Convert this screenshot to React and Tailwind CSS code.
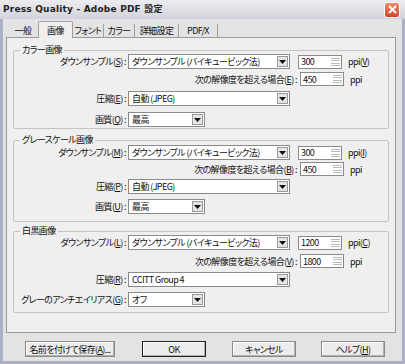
import React from "react";

const U = ({ c }) => <span className="underline">{c}</span>;

const Arrow = () => (
  <div className="w-[11px] h-[11px] my-auto mr-[1px] bg-[#e4e4e4] border border-[#9a9a9a] flex items-center justify-center">
    <svg width="7" height="4" viewBox="0 0 7 4"><path d="M0 0h7L3.5 4z" fill="#111" /></svg>
  </div>
);

const Sel = ({ w, children }) => (
  <div className={`${w} h-[15px] bg-white border border-[#8a8a8a] flex items-stretch`}>
    <div className="flex-1 pl-[3px] flex items-center whitespace-nowrap overflow-hidden">{children}</div>
    <Arrow />
  </div>
);

const Spin = ({ v }) => (
  <div className="w-[44px] h-[14px] bg-white border border-[#8a8a8a] flex items-stretch">
    <div className="flex-1 pl-[2px] flex items-center">{v}</div>
    <div className="w-[11px] flex flex-col justify-center items-center gap-[2px] pr-[1px]">
      <div className="w-[9px] h-[3px] border-t border-b border-[#b8b8b8]" />
      <div className="w-[9px] h-[3px] border-t border-b border-[#b8b8b8]" />
    </div>
  </div>
);

const Label = ({ children }) => (
  <div className="w-[114px] text-right pr-[2px] whitespace-nowrap">{children}</div>
);

const Group = ({ title, children, cls }) => (
  <div className={`relative border border-[#c4c4c4] rounded-[2px] ${cls}`}>
    <div className="absolute -top-[7px] left-[6px] px-[2px] bg-[#efefef] leading-[12px]">{title}</div>
    {children}
  </div>
);

const DownRows = ({ k1, k2, k3, k4, spin1, spin2, sel3, label4, sel4, gaps }) => (
  <>
    <div className={`flex items-center ${gaps[0]}`}>
      <Label>ダウンサンプル(<U c={k1} />) :</Label>
      <Sel w="w-[162px]">ダウンサンプル (バイキュービック法)</Sel>
      <div className="ml-[8px]"><Spin v={spin1} /></div>
      <div className="ml-[6px]">ppi(<U c={k2[0]} />)</div>
    </div>
    <div className={`flex items-center ${gaps[1]}`}>
      <div className="w-[286px] text-right pr-[3px] whitespace-nowrap">次の解像度を超える場合(<U c={k2[1]} />) :</div>
      <Spin v={spin2} />
      <div className="ml-[6px]">ppi</div>
    </div>
    <div className={`flex items-center ${gaps[2]}`}>
      <Label>圧縮(<U c={k3} />) :</Label>
      <Sel w="w-[162px]">{sel3}</Sel>
    </div>
    <div className={`flex items-center ${gaps[3]}`}>
      <Label>{label4}(<U c={k4} />) :</Label>
      <Sel w="w-[77px]">{sel4}</Sel>
    </div>
  </>
);

const Btn = ({ w, children, def }) => (
  <div className={`${w} h-[16px] flex items-center justify-center whitespace-nowrap bg-[#ececec] border ${def ? "border-[#202020]" : "border-[#8a8a8a]"} shadow-[inset_-1px_-1px_0_#b0b0b0,inset_1px_1px_0_#ffffff]`}>
    {children}
  </div>
);

export default function App() {
  return (
    <div
      className="w-[405px] h-[364px] bg-[#e3e3e3] text-[9px] tracking-[-0.6px] text-[#111] leading-none flex flex-col border-x-[3px] border-b-[3px] border-[#aeb0c6] [font-feature-settings:'palt']"
      style={{ fontFamily: '"Noto Sans CJK JP", "Noto Sans", sans-serif' }}
    >
      {/* title bar */}
      <div className="h-[19px] flex items-center bg-gradient-to-b from-[#ececf0] to-[#d2d3da] -mx-[3px] pl-[3px] pr-[5px]">
        <div className="font-bold text-[9px] tracking-[0.2px] text-[#222]" style={{ fontFamily: '"DejaVu Sans", "Noto Sans CJK JP", sans-serif' }}>
          Press Quality - Adobe PDF 設定
        </div>
        <div className="ml-auto w-[16px] h-[16px] rounded-[3px] bg-gradient-to-b from-[#f08a6e] to-[#d4402a] border border-white flex items-center justify-center">
          <svg width="9" height="9" viewBox="0 0 9 9"><path d="M1 1l7 7M8 1L1 8" stroke="#fff" strokeWidth="1.8" /></svg>
        </div>
      </div>

      {/* tabs */}
      <div className="flex items-end h-[17px] ml-[5px] mt-[1px]">
        <div className="h-[14px] w-[30px] flex items-center justify-center">一般</div>
        <div className="h-[17px] w-[35px] flex items-center justify-center bg-[#efefef] border border-b-0 border-[#a0a0a0] rounded-t-[2px] -mb-px relative z-10">画像</div>
        <div className="h-[13px] w-[31px] flex items-center justify-center border-r border-[#a0a0a0]">フォント</div>
        <div className="h-[13px] w-[31px] flex items-center justify-center border-r border-[#a0a0a0]">カラー</div>
        <div className="h-[13px] w-[44px] flex items-center justify-center border-r border-[#a0a0a0]">詳細設定</div>
        <div className="h-[13px] w-[39px] flex items-center justify-center border-r border-[#a0a0a0]">PDF/X</div>
      </div>

      {/* panel */}
      <div className="ml-[3px] mr-[6px] h-[296px] bg-[#efefef] border border-[#9a9a9a] pl-[6px] pr-[6px] pt-[12px]">
        <Group title="カラー画像" cls="h-[79px] pt-[3px]">
          <DownRows k1="S" k2={["V", "E"]} k3="E" k4="Q" spin1="300" spin2="450" sel3="自動 (JPEG)" label4="画質" sel4="最高" gaps={["", "mt-[3px]", "mt-[5px]", "mt-[6px]"]} />
        </Group>
        <Group title="グレースケール画像" cls="h-[82px] mt-[11px] pt-[4px]">
          <DownRows k1="M" k2={["I", "B"]} k3="P" k4="U" spin1="300" spin2="450" sel3="自動 (JPEG)" label4="画質" sel4="最高" gaps={["", "mt-[2px]", "mt-[3px]", "mt-[5px]"]} />
        </Group>
        <Group title="白黒画像" cls="h-[82px] mt-[9px] pt-[3px]">
          <DownRows k1="L" k2={["C", "V"]} k3="R" k4="G" spin1="1200" spin2="1800" sel3="CCITT Group 4" label4="グレーのアンチエイリアス" sel4="オフ" gaps={["", "mt-[4px]", "mt-[4px]", "mt-[5px]"]} />
        </Group>
      </div>

      {/* buttons */}
      <div className="flex items-center mt-[8px] ml-[22px]">
        <Btn w="w-[90px]">名前を付けて保存(<U c="A" />)...</Btn>
        <div className="ml-[27px]"><Btn w="w-[64px]" def>OK</Btn></div>
        <div className="ml-[26px]"><Btn w="w-[64px]">キャンセル</Btn></div>
        <div className="ml-[25px]"><Btn w="w-[64px]">ヘルプ(<U c="H" />)</Btn></div>
      </div>
    </div>
  );
}
